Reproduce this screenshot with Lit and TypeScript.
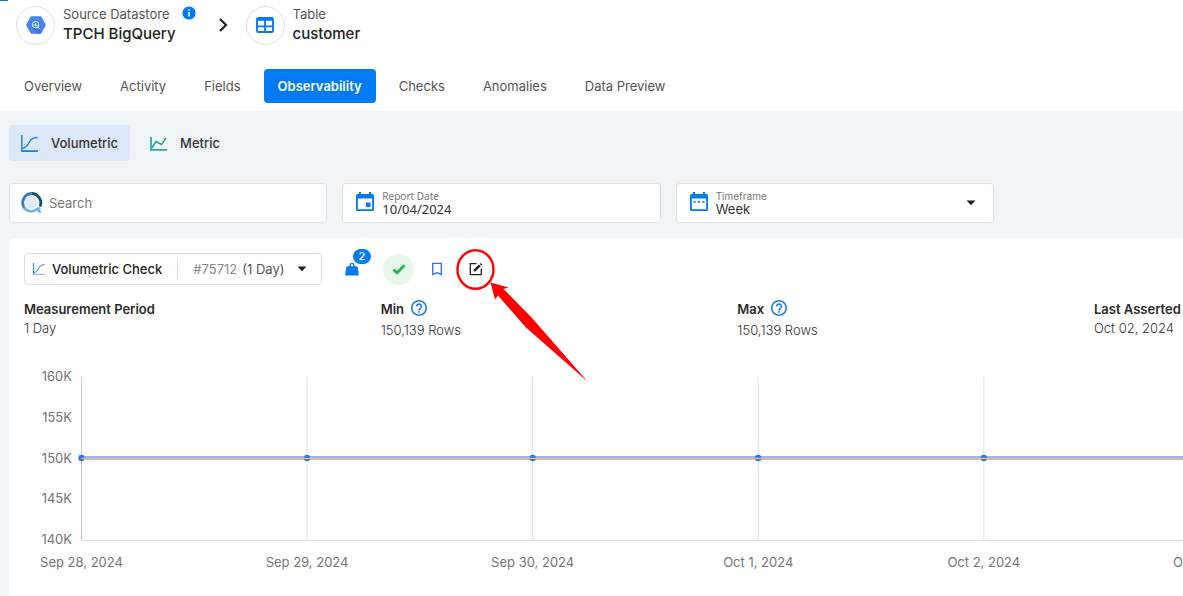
import { LitElement, html, svg, css } from "lit";
import { customElement, state } from "lit/decorators.js";

const TABS = ["Overview", "Activity", "Fields", "Observability", "Checks", "Anomalies", "Data Preview"];

@customElement("volume-chart")
class VolumeChart extends LitElement {
  static styles = css`
    :host { display: flex; gap: 9px; overflow: hidden; }
    .yaxis {
      display: flex; flex-direction: column; justify-content: space-between;
      width: 48px; height: 181px; text-align: right;
      font-size: 13px; line-height: 18px; color: #757575;
    }
    .plot { flex: 1; height: 208px; overflow: visible; margin-top: 10px; }
    .axis { stroke: #c9c9c9; }
    .grid { stroke: #e0e0e0; }
    .tick { fill: #757575; font-size: 13px; text-anchor: middle; }
    .upper { fill: #93b9f1; }
    .lower { fill: #b3cdf3; }
    .value { fill: #efb27c; }
    .dot { fill: #2f76dc; }
  `;

  private step = 20.47;
  private days = ["Sep 28, 2024", "Sep 29, 2024", "Sep 30, 2024", "Oct 1, 2024", "Oct 2, 2024", "Oct 3, 2024"];

  render() {
    const at = (i: number) => `${(i * this.step).toFixed(2)}%`;
    return html`
      <div class="yaxis">
        ${["160K", "155K", "150K", "145K", "140K"].map((v) => html`<span>${v}</span>`)}
      </div>
      <svg class="plot" width="100%" height="208" role="img" aria-label="Row count by day">
        <g transform="translate(0.5 0)">
          ${this.days.map((_, i) => svg`<line class=${i ? "grid" : "axis"} x1=${at(i)} x2=${at(i)} y1="0" y2="163" />`)}
          <line class="grid" x1="0" x2="100%" y1="163.5" y2="163.5" />
          <rect class="upper" x="0" y="79" width="100%" height="2" />
          <rect class="lower" x="0" y="82" width="100%" height="1" />
          ${this.days.map((_, i) => svg`<circle class="dot" cx=${at(i)} cy="81" r="3.2" />`)}
          <rect class="value" x="0" y="80.7" width="100%" height="1.5" />
          ${this.days.map((d, i) => svg`<text class="tick" x=${at(i)} y="190">${d}</text>`)}
        </g>
      </svg>
    `;
  }
}

@customElement("app-root")
class AppRoot extends LitElement {
  @state() private tab = "Observability";
  @state() private mode = "Volumetric";

  static styles = css`
    :host {
      display: flex; flex-direction: column; min-height: 100vh; overflow: hidden;
      font-family: Inter, "Open Sans", sans-serif; font-size: 13px; line-height: 20px;
      color: #333; background: #eff4f9;
    }
    button, input, select { font: inherit; color: inherit; border: 0; padding: 0; margin: 0; background: none; }
    button { cursor: pointer; }
    svg { display: block; flex: none; }

    .header { background: #fff; padding: 5px 16px 8px; }
    .loading { position: absolute; top: 0; left: 0; width: 8px; height: 1px; background: #007bf5; }
    .crumbs { display: flex; align-items: center; height: 40px; }
    .avatar {
      display: flex; align-items: center; justify-content: center; box-sizing: border-box;
      width: 39px; height: 39px; border: 1px solid #e0e0e0; border-radius: 50%; margin-right: 8px;
    }
    .kind { display: flex; gap: 12px; color: #555; line-height: 18px; }
    .kind svg { margin-top: 1px; }
    .name { font-size: 15px; line-height: 22px; font-weight: 500; color: #222; }
    .chevron { margin: 0 14px 0 18px; }

    .tabs { display: flex; gap: 8px; margin: 24px 0 0 -7px; }
    .tab { height: 34px; padding: 0 15px 1px; border-radius: 4px; color: #555; white-space: nowrap; }
    .tab.active { background: #007bf5; color: #fff; font-weight: 600; padding: 0 14px 1px; }

    .content { flex: 1; display: flex; flex-direction: column; padding: 14px 0 0 9px; }
    .modes { display: flex; gap: 8px; }
    .mode { display: flex; align-items: center; gap: 13px; height: 36px; padding: 0 12px; border-radius: 4px; font-weight: 500; }
    .mode.active { background: #dce8f8; }

    .filters { display: grid; grid-template-columns: repeat(3, minmax(0, 1fr)); gap: 15px; padding-right: 16.1%; margin: 22px 0 15px; }
    .field {
      display: flex; align-items: center; box-sizing: border-box; height: 40px; padding: 0 17px 0 11px;
      background: #fff; border: 1px solid #e2e2e2; border-radius: 4px; gap: 6px;
    }
    .stack { display: flex; flex-direction: column; flex: 1; min-width: 0; margin-bottom: 1px; }
    .caption { font-size: 10px; line-height: 12px; color: #777; }
    .input { flex: 1; min-width: 0; width: 100%; outline: 0; }
    .stack .input { height: 14px; font-size: 13px; line-height: 14px; appearance: none; }
    .input::placeholder { color: #777; opacity: 1; }
    .date { font-family: "Noto Sans", sans-serif; }

    .card { flex: 1; background: #fff; border-top-left-radius: 5px; padding: 15px 0 0 15px; }
    .toolbar { display: flex; align-items: center; height: 32px; }
    .check {
      display: flex; align-items: center; box-sizing: border-box; width: 298px; height: 32px;
      border: 1px solid #e0e0e0; border-radius: 4px; padding: 0 14px 0 8px; white-space: nowrap;
    }
    .checkname { color: #222; font-weight: 500; margin-left: 7px; }
    .divider { width: 1px; height: 19px; background: #ddd; margin: 0 15px; }
    .checkid { color: #8a8a8a; }
    .period { appearance: none; flex: 1; min-width: 0; color: #555; margin-left: 5px; outline: 0; }
    .icon { display: flex; align-items: center; justify-content: center; width: 32px; height: 32px; position: relative; }
    .weight { margin-left: 14px; }
    .passed { background: #e8f6ec; border-radius: 50%; width: 31px; height: 31px; margin: 0 7px 0 15px; }
    .edit { margin-left: 7px; }
    .badge {
      position: absolute; top: -4px; right: -3px; width: 18px; height: 15px; border-radius: 8px;
      background: #007bf5; color: #fff; font-size: 11px; line-height: 15px; font-weight: 500; text-align: center;
    }
    .pointer { position: absolute; left: -6px; top: -4px; pointer-events: none; }

    .stats { display: grid; grid-template-columns: repeat(3, minmax(0, 1fr)) 89px; margin: 14px 0 0; white-space: nowrap; }
    .stat { display: flex; flex-direction: column; }
    .label { display: flex; align-items: center; gap: 7px; font-weight: 600; color: #2b2b2b; line-height: 20px; }
    .label svg { margin-bottom: 2px; }
    .amount { margin: 0; line-height: 18px; font-weight: 300; color: #333; }
    .roomy .amount { line-height: 22px; }
    volume-chart { margin-top: 26px; }
  `;

  private curve(size: number, bottom = "#1a7bf5") {
    return html`<svg width=${size} height=${size} viewBox="0 0 16 16" fill="none" aria-hidden="true">
      <path d="M.8 0v15.2" stroke="#1a7bf5" stroke-width="1.3" /><path d="M.2 15.2H16" stroke=${bottom} stroke-width="1.7" />
      <path d="M1 12.800C4 12.600 5.600 10.500 7.300 7.500S10.500 2.300 15.500 2.300" stroke="#1a7bf5" stroke-width="1.300" /></svg>`;
  }

  private help() {
    return html`<svg width="16" height="16" viewBox="2 2 20 20" fill="#1a7bf5" aria-hidden="true">
      <path d="M11 18h2v-2h-2v2zm1-16C6.480 2 2 6.480 2 12s4.480 10 10 10 10-4.480 10-10S17.520 2 12 2zm0 18c-4.410 0-8-3.590-8-8s3.590-8 8-8 8 3.590 8 8-3.590 8-8 8zm0-14c-2.210 0-4 1.790-4 4h2c0-1.100.9-2 2-2s2 .9 2 2c0 2-3 1.750-3 5h2c0-2.250 3-2.500 3-5 0-2.210-1.790-4-4-4z" /></svg>`;
  }

  private caret() {
    return html`<svg width="10" height="6" viewBox="0 0 10 6" aria-hidden="true"><path d="M.5.5h9L5 5.200z" fill="#222" /></svg>`;
  }

  private calendar(inner: unknown) {
    return html`<svg width="22" height="24" viewBox="0 0 22 24" aria-hidden="true">
      <path fill="#007bf5" fill-rule="evenodd" d="M5 1h2v2h8V1h2v2h1.500c.9 0 1.500.7 1.500 1.500v14c0 .9-.6 1.500-1.500 1.500h-15c-.9 0-1.500-.6-1.500-1.500v-14C2 3.700 2.600 3 3.500 3H5zM3.800 7.500v10.700h14.400V7.500z" />${inner}</svg>`;
  }

  render() {
    return html`
      <header class="header">
        <div class="loading"></div>
        <div class="crumbs">
          <span class="avatar">
            <svg width="20" height="18" viewBox="0 0 20 18"><path d="M5.500.3h9c.5 0 .9.2 1.100.6l4 7.300c.3.500.3 1.100 0 1.600l-4 7.300c-.2.400-.6.600-1.100.6h-9c-.5 0-.9-.2-1.100-.6l-4-7.300c-.3-.5-.3-1.100 0-1.600l4-7.300c.2-.4.600-.6 1.100-.6z" fill="#4583ef" />
              <path d="M8 6l7 7-1 4.700h-3L7 12z" fill="#3b74dc" /><circle cx="9.600" cy="8.700" r="3.200" fill="#4583ef" stroke="#fff" stroke-width="1" /><path d="M12 11l2 2.200M8.300 8.500v1.300M9.600 7.200v3.100M10.900 9v1" stroke="#fff" stroke-width=".9" /></svg>
          </span>
          <div>
            <div class="kind">Source Datastore
              <svg width="14" height="14" viewBox="0 0 14 14"><circle cx="7" cy="7" r="6.600" fill="#007bf5" /><path d="M7 3.200v1.600M7 6v4.500" stroke="#fff" stroke-width="1.500" /></svg>
            </div>
            <div class="name">TPCH BigQuery</div>
          </div>
          <svg class="chevron" width="18" height="18" viewBox="0 0 18 18" fill="none"><path d="M6 3l6 6-6 6" stroke="#222" stroke-width="2.200" /></svg>
          <span class="avatar">
            <svg width="18" height="16" viewBox="0 0 18 16" fill="none" stroke="#007bf5"><rect x="1" y="1" width="16" height="14" rx="1.300" stroke-width="1.900" /><path d="M1 2.400h16" stroke-width="2.800" /><path d="M1 9.300h16M9 3v12" stroke-width="1.800" /></svg>
          </span>
          <div>
            <div class="kind">Table</div>
            <div class="name">customer</div>
          </div>
        </div>
        <nav class="tabs">
          ${TABS.map((t) => html`<button class="tab ${t === this.tab ? "active" : ""}" @click=${() => (this.tab = t)}>${t}</button>`)}
        </nav>
      </header>

      <main class="content">
        <div class="modes">
          <button class="mode ${this.mode === "Volumetric" ? "active" : ""}" @click=${() => (this.mode = "Volumetric")}>${this.curve(17)}Volumetric</button>
          <button class="mode ${this.mode === "Metric" ? "active" : ""}" @click=${() => (this.mode = "Metric")}>
            <svg width="17" height="17" viewBox="0 0 17 17" fill="none" stroke="#26a69a"><path d="M1 2v12.800h16" stroke-width="1.700" /><path d="M1.800 13L6 6.500l5.500 3L16 3" stroke-width="1.500" /></svg>Metric
          </button>
        </div>

        <div class="filters">
          <div class="field">
            <svg width="22" height="22" viewBox="0 0 22 22" fill="none">
              <circle cx="10.500" cy="10.500" r="6" fill="#dcebfa" />
              <path d="M4 16.800A9.300 9.300 0 0 1 10.500 1.500" stroke="#3679b8" stroke-width="2.800" />
              <path d="M10.500 1.500a9.300 9.300 0 0 1 8.500 13" stroke="#134b78" stroke-width="2.800" />
              <path d="M3.200 15.500c3 4.600 8.800 5 13 1.600l3.300 3.600M19.200 15.800l-3.500 1.800" stroke="#6fb0ea" stroke-width="2.600" />
            </svg>
            <input class="input" type="search" placeholder="Search" aria-label="Search" />
          </div>
          <label class="field">
            ${this.calendar(svg`<rect x="12" y="11.500" width="4.500" height="4.500" fill="#007bf5" />`)}
            <span class="stack date"><span class="caption">Report Date</span><input class="input" type="text" .value=${"10/04/2024"} /></span>
          </label>
          <label class="field">
            ${this.calendar(svg`<path d="M5.500 10h2v1.800h-2zm4.500 0h2v1.800h-2zm4.500 0h2v1.800h-2z" fill="#007bf5" />`)}
            <span class="stack"><span class="caption">Timeframe</span><select class="input"><option>Week</option><option>Month</option></select></span>
            ${this.caret()}
          </label>
        </div>

        <section class="card">
          <div class="toolbar">
            <label class="check">
              ${this.curve(12, "#8fb8f8")}<span class="checkname">Volumetric Check</span><span class="divider"></span>
              <span class="checkid">#75712</span><select class="period"><option>(1 Day)</option></select>${this.caret()}
            </label>
            <button class="icon weight" aria-label="Weight">
              <svg width="14" height="14" viewBox="0 0 14 14"><path fill="#007bf5" fill-rule="evenodd" d="M7 .8a2.500 2.500 0 0 1 2.400 3.400h2c.6 0 1 .3 1.200.9l1.200 7.100c.1.700-.3 1.300-1 1.300H1.200c-.7 0-1.100-.6-1-1.300l1.200-7.100c.2-.6.600-.9 1.200-.9h2A2.500 2.500 0 0 1 7 .8zm0 1.300a1.200 1.200 0 1 0 0 2.400 1.200 1.200 0 0 0 0-2.400z" /></svg>
              <span class="badge">2</span>
            </button>
            <span class="icon passed"><svg width="14" height="12" viewBox="0 0 14 12" fill="none"><path d="M1.500 6.500l3.500 3.300 7.500-7.600" stroke="#1fb84e" stroke-width="2.700" /></svg></span>
            <button class="icon" aria-label="Bookmark"><svg width="12" height="14" viewBox="0 0 12 14" fill="none"><path d="M1.700 1.400h8.600v11L6 10.600l-4.300 1.800z" stroke="#2f6bff" stroke-width="1.300" /></svg></button>
            <button class="icon edit" aria-label="Edit">
              <svg width="14" height="14" viewBox="0 0 14 14" fill="none" stroke="#222"><path d="M7.500 1.700H1.300v11h11V6.500" stroke-width="1.300" /><path d="M4.500 9.600l.4-2L9.900 2.600l1.700 1.700-5 5z" fill="#222" stroke="none" /><path d="M10.600 1.900l1-.9 1.700 1.700-1 .9z" fill="#222" stroke="none" /></svg>
              <svg class="pointer" width="138" height="138" viewBox="0 0 138 138" fill="none">
                <ellipse cx="21.500" cy="20.500" rx="18" ry="19.300" stroke="#f00" stroke-width="2.400" />
                <path d="M36.500 33.500l18 5-5 1.500L78 69l55.500 63.500L72 78.500 44 46.500 41 50.500z" fill="#f00" />
              </svg>
            </button>
          </div>

          <div class="stats">
            <div class="stat"><span class="label">Measurement Period</span><p class="amount">1 Day</p></div>
            <div class="stat roomy"><span class="label">Min ${this.help()}</span><p class="amount">150,139 Rows</p></div>
            <div class="stat roomy"><span class="label">Max ${this.help()}</span><p class="amount">150,139 Rows</p></div>
            <div class="stat"><span class="label">Last Asserted</span><p class="amount">Oct 02, 2024</p></div>
          </div>

          <volume-chart></volume-chart>
        </section>
      </main>
    `;
  }
}
